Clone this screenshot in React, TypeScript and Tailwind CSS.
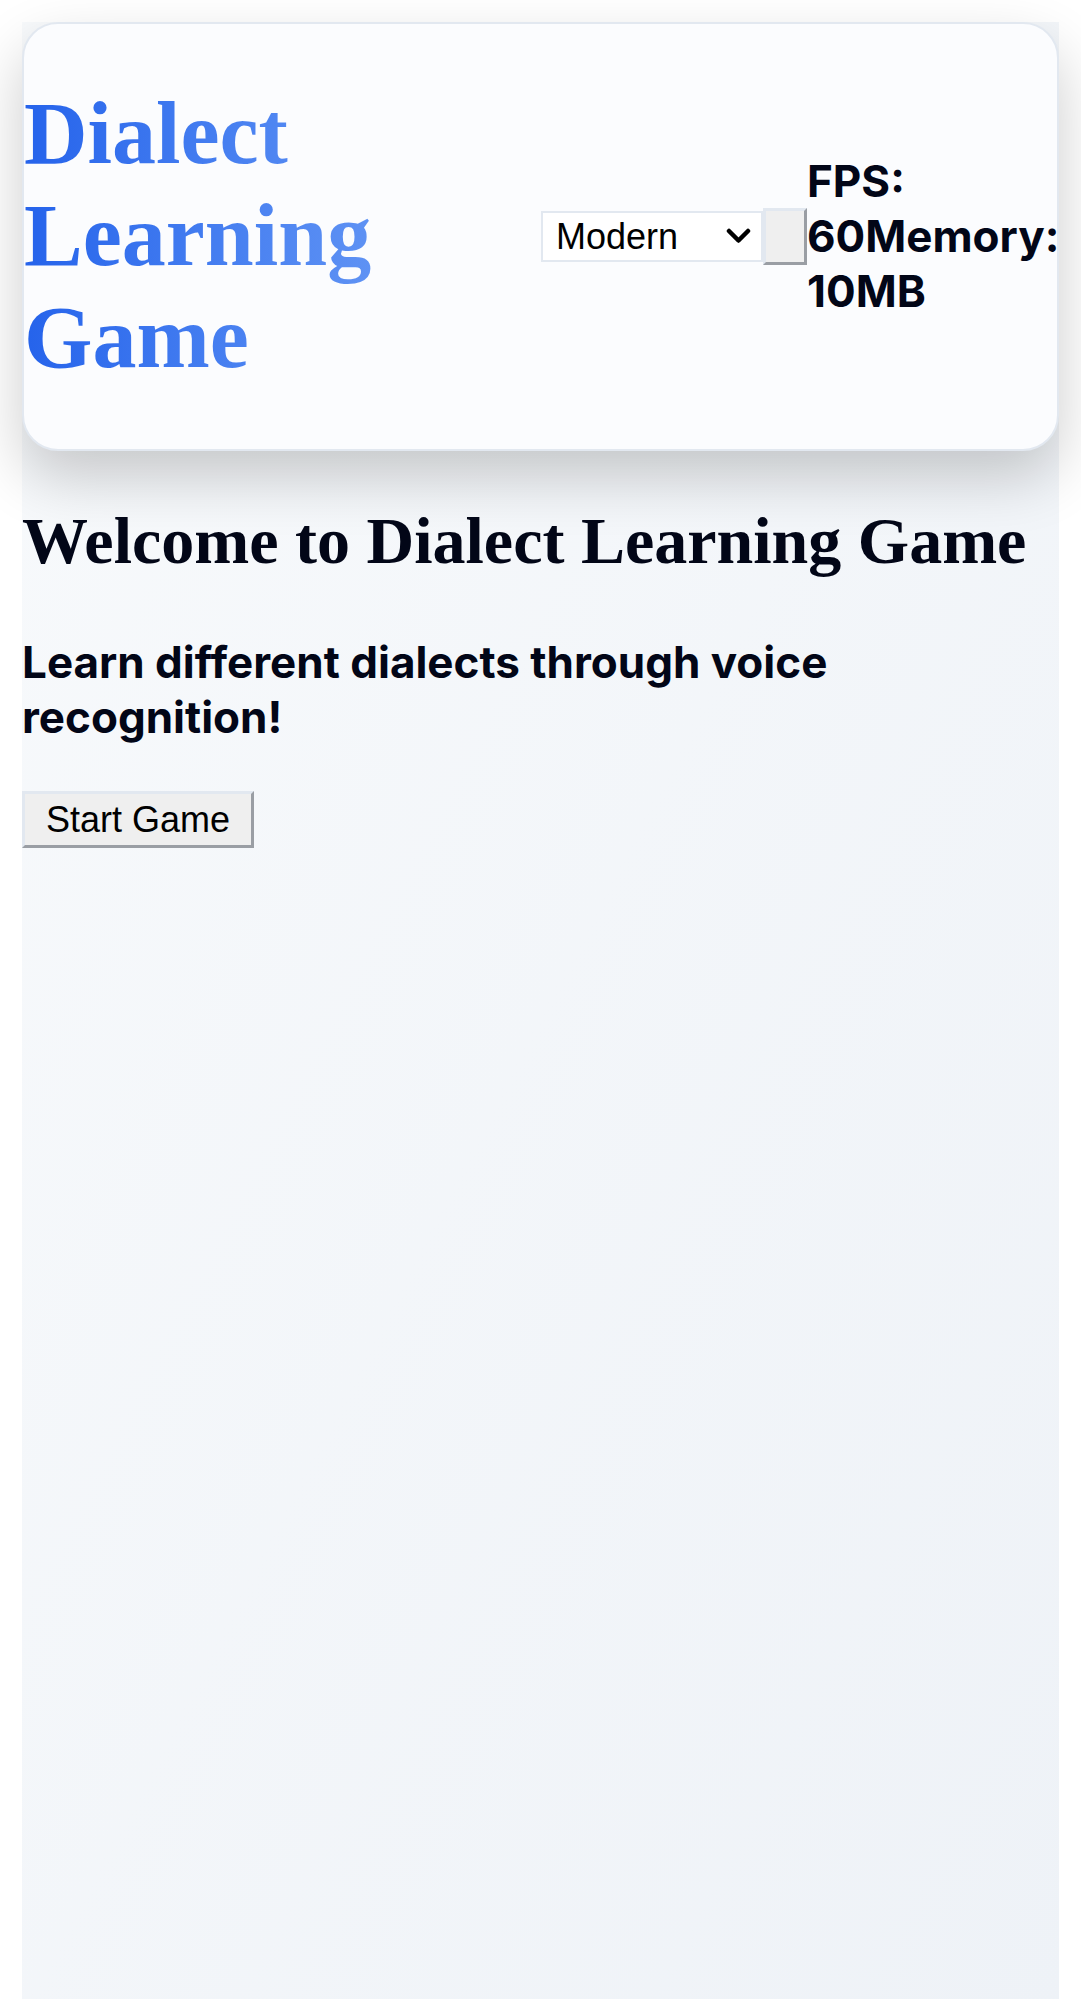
import { useState } from 'react';

const serif = "font-['Liberation_Serif','Times_New_Roman',serif]";
const sans = "font-['Inter','Noto_Sans',sans-serif]";
const arial = "font-['Liberation_Sans',Arial,sans-serif]";

const stats = { fps: 60, memory: '10MB' };

function Chevron() {
  return (
    <svg className="pointer-events-none absolute right-[12px] top-1/2 -translate-y-1/2" width="25" height="16" viewBox="0 0 25 16" fill="none">
      <path d="M3 3l9.5 9.5L22 3" stroke="#000" strokeWidth="4.5" strokeLinecap="round" strokeLinejoin="round" />
    </svg>
  );
}

function Header() {
  const [theme, setTheme] = useState('modern');

  return (
    <header className="flex items-center rounded-[36px] border-2 border-[#e2e8f0] bg-[#fbfcfe] pt-[59px] pb-[60px] shadow-[0_26px_60px_rgba(0,0,0,0.2)]">
      <h1
        className={`${serif} flex-1 bg-gradient-to-r from-[#2563eb] to-[#7aa7f7] bg-clip-text text-[88px] font-bold leading-[102px] text-transparent`}
      >
        Dialect Learning Game
      </h1>
      <div className="flex shrink-0 items-center">
        <div className="relative">
          <select
            value={theme}
            onChange={(e) => setTheme(e.target.value)}
            className={`${arial} h-[51px] w-[222px] appearance-none border-2 border-[#e2e8f0] bg-white pl-[13px] text-[36px] leading-[41px] text-black`}
          >
            <option value="modern">Modern</option>
            <option value="classic">Classic</option>
          </select>
          <Chevron />
        </div>
        <button className="h-[57px] w-[44px] border-[3px] border-t-[#e2e8f0] border-l-[#e2e8f0] border-b-[#9a9ea4] border-r-[#9a9ea4] bg-[#efefef]" />
      </div>
      <div className={`${sans} w-[250px] shrink-0 text-[44px] font-bold leading-[55px] text-[#020617]`}>
        {`FPS: ${stats.fps}Memory: ${stats.memory}`}
      </div>
    </header>
  );
}

export default function App() {
  return (
    <div className="min-h-screen bg-white">
      <div className="m-[22px] mb-0 min-h-screen bg-gradient-to-br from-[#f8fafc] to-[#eef2f7]">
        <Header />
        <main>
          <h2 className={`${serif} mt-[40px] text-[66px] font-bold leading-[99px] text-[#020617]`}>
            Welcome to Dialect Learning Game
          </h2>
          <p className={`${sans} mt-[45px] max-w-[1000px] text-[44px] font-bold leading-[55px] text-[#020617]`}>
            Learn different dialects through voice recognition!
          </p>
          <button
            className={`${arial} mt-[46px] border-[3px] border-t-[#e2e8f0] border-l-[#e2e8f0] border-b-[#9a9ea4] border-r-[#9a9ea4] bg-[#efefef] px-[21px] py-[5px] text-[36px] leading-[41px] text-black`}
          >
            Start Game
          </button>
        </main>
      </div>
    </div>
  );
}
